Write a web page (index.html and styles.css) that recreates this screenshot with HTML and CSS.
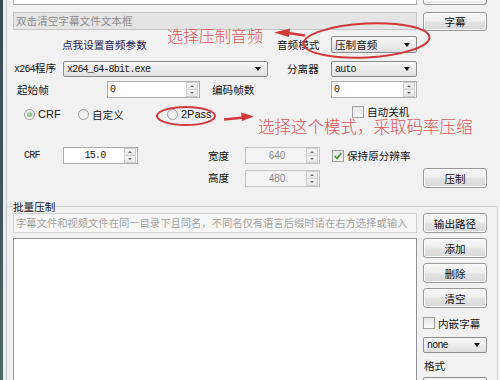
FILE: index.html
```html
<!DOCTYPE html>
<html lang="zh-CN">
<head>
<meta charset="utf-8">
<title>x264 压制</title>
<link rel="stylesheet" href="styles.css">
</head>
<body>
<div class="window">
  <div class="frame"></div>
  <div class="client">
    <div class="upper">
      <div class="col-left">
        <div class="tb stub"></div>
        <div class="tb sub-file">双击清空字幕文件文本框</div>

        <div class="row row-audio">
          <span class="lbl audio-link">点我设置音频参数</span>
          <span class="lbl audio-mode-label">音频模式</span>
          <div class="combo audio-mode"><span>压制音频</span><i class="caret"></i></div>
        </div>

        <div class="row row-x264">
          <span class="lbl x264-label"><span class="asc">x264</span>程序</span>
          <div class="combo x264-combo"><span class="asc">x264_64-8bit.exe</span><i class="caret"></i></div>
          <span class="lbl demux-label">分离器</span>
          <div class="combo demux-combo"><span class="asc">auto</span><i class="caret"></i></div>
        </div>

        <div class="row row-frames">
          <span class="lbl start-label">起始帧</span>
          <div class="spin start-spin"><span class="val asc">0</span><span class="arrows"><i class="up"></i><i class="down"></i></span></div>
          <span class="lbl frames-label">编码帧数</span>
          <div class="spin frames-spin"><span class="val asc">0</span><span class="arrows"><i class="up"></i><i class="down"></i></span></div>
        </div>

        <div class="row row-mode">
          <label class="radio r-crf"><i class="dot on"></i><span class="lat">CRF</span></label>
          <label class="radio r-custom"><i class="dot"></i><span>自定义</span></label>
          <label class="radio r-2pass"><i class="dot"></i><span class="lat">2Pass</span></label>
          <label class="check auto-off"><i class="box"></i><span class="tight">自动关机</span></label>
        </div>

        <div class="row row-crf">
          <span class="lbl crf-label asc">CRF</span>
          <div class="spin crf-spin"><span class="val center asc">15.0</span><span class="arrows"><i class="up"></i><i class="down"></i></span></div>
          <span class="lbl width-label">宽度</span>
          <div class="spin off width-spin"><span class="val center">640</span><span class="arrows"><i class="up"></i><i class="down"></i></span></div>
          <label class="check keep-res"><i class="box"><svg viewBox="0 0 12 12" width="10" height="10"><path d="M2 6.2 L4.8 9 L10 2.5" fill="none" stroke="#3b9a35" stroke-width="2"/></svg></i><span>保持原分辨率</span></label>
        </div>

        <div class="row row-height">
          <span class="lbl height-label">高度</span>
          <div class="spin off height-spin"><span class="val center">480</span><span class="arrows"><i class="up"></i><i class="down"></i></span></div>
        </div>
      </div>

      <div class="col-right">
        <div class="btn stub-btn"></div>
        <div class="btn sub-btn">字幕</div>
        <div class="btn encode-btn">压制</div>
      </div>
    </div>

    <fieldset class="batch">
      <legend class="batch-title">批量压制</legend>
      <div class="batch-body">
        <div class="batch-left">
          <div class="tb hint">字幕文件和视频文件在同一目录下且同名，不同名仅有语言后缀时请在右方选择或输入</div>
          <div class="list"></div>
        </div>
        <div class="batch-right">
          <div class="btn out-btn">输出路径</div>
          <div class="btn gap-btn">添加</div>
          <div class="btn gap-btn">删除</div>
          <div class="btn gap-btn">清空</div>
          <label class="check embed"><i class="box"></i><span>内嵌字幕</span></label>
          <div class="combo fmt-combo"><span class="asc">none</span><i class="caret"></i></div>
          <span class="lbl fmt-label">格式</span>
          <div class="combo fmt2-combo"><i class="caret"></i></div>
        </div>
      </div>
    </fieldset>
  </div>

  <svg class="marks" width="500" height="380" viewBox="0 0 500 380">
    <ellipse cx="366.5" cy="40.5" rx="63" ry="17" transform="rotate(-3 366.5 40.5)" fill="none" stroke="#d2383b" stroke-width="2"/>
    <path d="M288 33 L305 35.5" stroke="#d2383b" stroke-width="2.5" fill="none"/>
    <polygon points="274,32.5 290,28.5 289,37" fill="#d2383b"/>
    <ellipse cx="186" cy="116" rx="29" ry="9" fill="none" stroke="#d2383b" stroke-width="2"/>
    <path d="M224 119.5 L244 117.5" stroke="#d2383b" stroke-width="2.5" fill="none"/>
    <polygon points="254,116.5 241,112.5 242,121" fill="#d2383b"/>
  </svg>
  <span class="note note-audio">选择压制音频</span>
  <span class="note note-mode">选择这个模式，采取码率压缩</span>
</div>
</body>
</html>
```

FILE: styles.css
```css
* { box-sizing: border-box; }

html, body {
  margin: 0;
  padding: 0;
}

body {
  width: 500px;
  height: 380px;
  overflow: hidden;
  font-family: "Noto Sans CJK SC", sans-serif;
  font-size: 10.6px;
  color: #161616;
  background: #f0f0f0;
}

.window {
  position: relative;
  display: flex;
  width: 500px;
  height: 380px;
  overflow: hidden;
  background: #e9eef0;
}

.frame {
  flex: none;
  width: 3px;
  background: linear-gradient(180deg, #3a4852 0%, #44585e 60%, #4a6b63 100%);
}

.client {
  flex: none;
  width: 494px;
  margin-left: 3px;
  border-left: 1px solid #c0c5c8;
  background: #f1f1f1;
}

/* ---------- upper area ---------- */
.upper {
  display: flex;
  height: 200px;
  padding-left: 6px;
}

.col-left {
  flex: none;
  width: 404px;
}

.col-right {
  flex: none;
  width: 64px;
  margin-left: 6px;
  display: flex;
  flex-direction: column;
}

.tb {
  border: 1px solid #abadb3;
  background: #fff;
}

.stub {
  height: 5px;
  border-top: none;
}

.sub-file {
  margin-top: 7px;
  height: 18px;
  padding-left: 2px;
  line-height: 16px;
  background: #e4e4e4;
  border-color: #c6c6c6;
  color: #8d8d8d;
  white-space: nowrap;
}

.row {
  display: flex;
  align-items: center;
}

.lbl {
  flex: none;
  white-space: nowrap;
  line-height: 16px;
}

.asc {
  font-family: "Liberation Mono", monospace;
  font-size: 10px;
  letter-spacing: -0.8px;
}

.lat {
  font-family: "Liberation Sans", sans-serif;
  font-size: 11px;
}

.tight {
  line-height: 12px;
}

/* row: audio */
.row-audio { margin-top: 6px; height: 17px; }
.audio-link { margin-left: 49px; width: 88px; color: #1d1d5e; }
.audio-mode-label { margin-left: 127px; width: 44px; }
.audio-mode { margin-left: 10px; width: 86px; height: 17px; }

/* row: x264 */
.row-x264 { margin-top: 8px; height: 16px; }
.x264-label { margin-left: 1px; width: 44px; }
.x264-combo { margin-left: 5px; width: 205px; height: 16px; }
.demux-label { margin-left: 19px; width: 33px; }
.demux-combo { margin-left: 11px; width: 86px; height: 16px; }

/* row: frames */
.row-frames { margin-top: 4px; height: 17px; }
.start-label { margin-left: 4px; width: 33px; }
.start-spin { margin-left: 57px; width: 93px; }
.frames-label { margin-left: 12px; width: 44px; }
.frames-spin { margin-left: 75px; width: 86px; }

/* row: mode */
.row-mode { margin-top: 6px; height: 20px; }
.r-crf { margin-left: 11px; width: 50px; }
.r-custom { margin-left: 4px; width: 60px; }
.r-2pass { margin-left: 29px; width: 50px; }
.auto-off { margin-left: 135px; width: 65px; align-self: flex-start; margin-top: 2px; }

/* row: crf */
.row-crf { margin-top: 23px; height: 17px; }
.crf-label { margin-left: 11px; width: 39px; color: #222; }
.crf-spin { width: 75px; }
.width-label { margin-left: 70px; width: 37px; }
.width-spin { width: 75px; }
.keep-res { margin-left: 12px; width: 85px; }

/* row: height */
.row-height { margin-top: 5px; height: 18px; }
.height-label { margin-left: 195px; width: 37px; }
.height-spin { width: 75px; height: 18px; }

/* ---------- controls ---------- */
.btn {
  flex: none;
  display: flex;
  align-items: center;
  justify-content: center;
  height: 20px;
  border: 1px solid #9a9a9a;
  border-radius: 3px;
  background: linear-gradient(180deg, #f8f8f8 0%, #efefef 45%, #e2e2e2 55%, #d8d8d8 100%);
  box-shadow: inset 0 0 0 1px #fbfbfb;
  white-space: nowrap;
  color: #111;
}

.stub-btn {
  height: 5px;
  border-top: none;
  border-radius: 0 0 3px 3px;
}

.sub-btn { margin-top: 7px; height: 19px; }
.encode-btn { margin-top: 137px; }

.combo {
  flex: none;
  display: flex;
  align-items: center;
  padding-left: 3px;
  border: 1px solid #8d8e8f;
  border-radius: 2px;
  background: linear-gradient(180deg, #f7f7f7 0%, #ececec 50%, #dfdfdf 100%);
  white-space: nowrap;
  overflow: hidden;
}

.caret {
  margin-left: auto;
  margin-right: 6px;
  width: 0;
  height: 0;
  border-left: 3.5px solid transparent;
  border-right: 3.5px solid transparent;
  border-top: 4px solid #111;
}

.spin {
  flex: none;
  display: flex;
  height: 17px;
  border: 1px solid #abadb3;
  background: #fff;
}

.spin.off {
  background: #f4f4f4;
  border-color: #c4c4c4;
  color: #8a8a8a;
  font-family: "Liberation Sans", sans-serif;
  font-size: 10px;
}

.spin .val {
  flex: 1;
  padding-left: 2px;
  line-height: 15px;
  white-space: nowrap;
}

.spin .val.center {
  text-align: center;
}

.arrows {
  flex: none;
  display: flex;
  flex-direction: column;
  width: 12px;
  margin: 0 1px 0 0;
}

.arrows i {
  flex: 1;
  position: relative;
  border: 1px solid #cfcfcf;
  background: linear-gradient(180deg, #f6f6f6, #e6e6e6);
}

.arrows i.down { border-top: none; }

.arrows i::after {
  content: "";
  position: absolute;
  left: 3px;
  top: 2px;
  width: 0;
  height: 0;
  border-left: 2px solid transparent;
  border-right: 2px solid transparent;
}

.arrows i.up::after { border-bottom: 2px solid #6a6a6a; }
.arrows i.down::after { top: 2px; border-top: 2px solid #6a6a6a; }

.radio, .check {
  flex: none;
  display: flex;
  align-items: center;
  gap: 3px;
  white-space: nowrap;
}

.dot {
  flex: none;
  position: relative;
  width: 11px;
  height: 11px;
  border: 1px solid #9c9c9c;
  border-radius: 50%;
  background: linear-gradient(180deg, #e5e5e5, #fbfbfb);
}

.dot.on::after {
  content: "";
  position: absolute;
  left: 2px;
  top: 2px;
  width: 5px;
  height: 5px;
  border-radius: 50%;
  background: radial-gradient(circle at 40% 40%, #b5e6a8, #4fa844);
}

.box {
  flex: none;
  display: flex;
  align-items: center;
  justify-content: center;
  width: 12px;
  height: 12px;
  border: 1px solid #a0a0a0;
  background: linear-gradient(180deg, #e4e4e4, #fbfbfb);
}

/* ---------- batch group ---------- */
.batch {
  margin: 0;
  padding: 0 10px 0 6px;
  min-width: 0;
  width: 491px;
  height: 180px;
  border: 1px solid #d4d4d4;
  border-left: none;
  border-bottom: none;
}

.batch-title {
  padding: 0;
  line-height: 13px;
  color: #111;
}

.batch-body {
  display: flex;
}

.batch-left {
  flex: none;
  width: 404px;
}

.hint {
  height: 20px;
  padding-left: 2px;
  line-height: 18px;
  font-size: 10.3px;
  border-color: #cfcfcf;
  background: #f7f7f7;
  color: #a4a4a4;
  white-space: nowrap;
  overflow: hidden;
}

.list {
  margin-top: 5px;
  height: 170px;
  border: 1px solid #8f9398;
  background: #fff;
}

.batch-right {
  flex: none;
  width: 64px;
  margin-left: 6px;
  display: flex;
  flex-direction: column;
}

.gap-btn { margin-top: 5px; }

.embed { margin-top: 9px; height: 12px; }

.fmt-combo { margin-top: 8px; height: 16px; width: 64px; }
.fmt-label { margin-top: 5px; margin-left: 1px; line-height: 15px; }
.fmt2-combo { margin-top: 4px; height: 16px; width: 64px; }

/* ---------- red annotations ---------- */
.marks {
  position: absolute;
  left: 0;
  top: 0;
  pointer-events: none;
}

.note {
  position: absolute;
  color: #e05456;
  font-family: "Noto Sans CJK SC", sans-serif;
  font-weight: 300;
  line-height: 16px;
  white-space: nowrap;
  pointer-events: none;
}

.note-audio {
  left: 167px;
  top: 27px;
  font-size: 16px;
}

.note-mode {
  left: 258px;
  top: 118px;
  font-size: 16.5px;
}
```
